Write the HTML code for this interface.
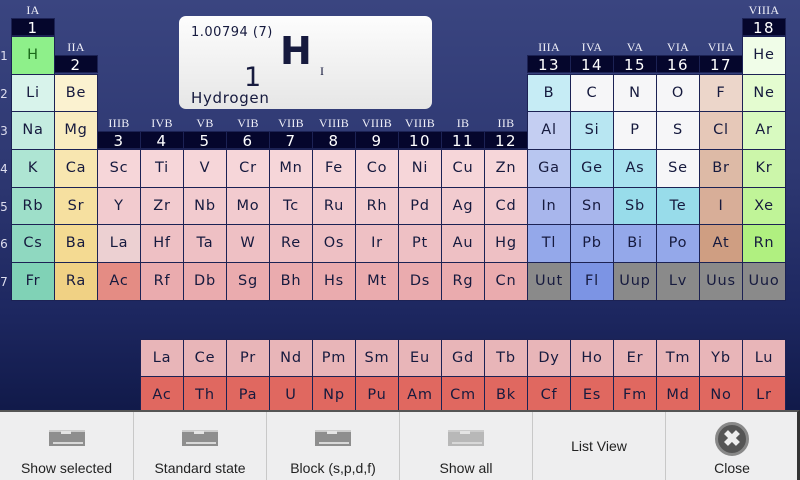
<!DOCTYPE html>
<html><head><meta charset="utf-8"><style>
*{margin:0;padding:0;box-sizing:border-box}
body{width:800px;height:480px;overflow:hidden;position:relative;background:linear-gradient(180deg,#3a4580 0%,#2e3872 35%,#1d2760 65%,#111a4a 85%);font-family:"DejaVu Sans","Liberation Sans",sans-serif}
.c{position:absolute;width:44px;height:39px;border:1px solid #1c2254;color:#161a3e;font-size:14.5px;letter-spacing:.8px;text-align:center;line-height:36px}
.h{position:absolute;width:44px;height:18px;background:#05062c;color:#fff;font-size:15px;letter-spacing:1.5px;text-align:center;line-height:18px;border:1px solid #1c2254}
.g{position:absolute;width:44px;color:#f0f0f8;font-family:"Liberation Serif",serif;font-size:12px;text-align:center;letter-spacing:.3px}
.p{position:absolute;left:0;color:#dde;font-size:12px;width:8px;text-align:center}
.x1{left:11px}.x2{left:54px}.x3{left:97px}.x4{left:140px}.x5{left:183px}.x6{left:226px}.x7{left:269px}.x8{left:312px}.x9{left:355px}.x10{left:398px}.x11{left:441px}.x12{left:484px}.x13{left:527px}.x14{left:570px}.x15{left:613px}.x16{left:656px}.x17{left:699px}.x18{left:742px}
.y1{top:36px}.y2{top:74px}.y3{top:111px}.y4{top:149px}.y5{top:187px}.y6{top:224px}.y7{top:262px}.l1{top:339px}.l2{top:376px}
.r4{background:#f6d6d9}.r5{background:#f2cbcf}.r6{background:#eec0c4}.r7{background:#eaabae}
.ln{background:#e8b5b8}.ac{background:#e06860}
.pm1{background:#c4cef2}.pm2{background:#b8c6f0}.pm3{background:#a8b6ec}.pm4{background:#94a8ea}
.mt1{background:#c6ecf5}.mt2{background:#b8e6f2}.mt3{background:#a8e2ef}.mt4{background:#98dcea}
.nm{background:#f6f6f8}.gr{background:#8a8a8a}
#info{position:absolute;left:179px;top:16px;width:253px;height:93px;border-radius:7px;background:linear-gradient(180deg,#fdfdfd,#e6e6e6);color:#161a3e}
#tb{position:absolute;left:0;top:410px;width:800px;height:70px;background:#eeeeef;border-top:2px solid #555;border-right:3px solid #333}
.b{position:absolute;top:0;height:68px;width:133px;border-left:1px solid #c8c8c8;text-align:center;font-family:"Liberation Sans",sans-serif;font-size:14px;color:#222}
.b span{position:absolute;left:0;right:0;top:48px}
.ic{position:absolute;left:50%;margin-left:-18px;top:18px;width:36px;height:16px;background:#8e8e8e;border-top:2px solid #ccc}
.ic:before{content:"";position:absolute;left:12px;top:-1px;width:10px;height:3px;background:#e4e4e4}
.ic:after{content:"";position:absolute;left:4px;right:2px;bottom:2px;height:2px;background:#d8d8d8}
</style></head><body>
<div class="g x1" style="top:3px">IA</div><div class="h x1" style="top:18px">1</div>
<div class="g x2" style="top:40px">IIA</div><div class="h x2" style="top:55px">2</div>
<div class="g x3" style="top:116px">IIIB</div><div class="h x3" style="top:131px">3</div>
<div class="g x4" style="top:116px">IVB</div><div class="h x4" style="top:131px">4</div>
<div class="g x5" style="top:116px">VB</div><div class="h x5" style="top:131px">5</div>
<div class="g x6" style="top:116px">VIB</div><div class="h x6" style="top:131px">6</div>
<div class="g x7" style="top:116px">VIIB</div><div class="h x7" style="top:131px">7</div>
<div class="g x8" style="top:116px">VIIIB</div><div class="h x8" style="top:131px">8</div>
<div class="g x9" style="top:116px">VIIIB</div><div class="h x9" style="top:131px">9</div>
<div class="g x10" style="top:116px">VIIIB</div><div class="h x10" style="top:131px">10</div>
<div class="g x11" style="top:116px">IB</div><div class="h x11" style="top:131px">11</div>
<div class="g x12" style="top:116px">IIB</div><div class="h x12" style="top:131px">12</div>
<div class="g x13" style="top:40px">IIIA</div><div class="h x13" style="top:55px">13</div>
<div class="g x14" style="top:40px">IVA</div><div class="h x14" style="top:55px">14</div>
<div class="g x15" style="top:40px">VA</div><div class="h x15" style="top:55px">15</div>
<div class="g x16" style="top:40px">VIA</div><div class="h x16" style="top:55px">16</div>
<div class="g x17" style="top:40px">VIIA</div><div class="h x17" style="top:55px">17</div>
<div class="g x18" style="top:3px">VIIIA</div><div class="h x18" style="top:18px">18</div>
<div class="p" style="top:49px">1</div><div class="p" style="top:87px">2</div><div class="p" style="top:124px">3</div><div class="p" style="top:162px">4</div><div class="p" style="top:200px">5</div><div class="p" style="top:237px">6</div><div class="p" style="top:275px">7</div>

<div class="c x1 y1" style="background:#8ef08a;color:#1a6a1a">H</div>
<div class="c x1 y2" style="background:#d8f3eb">Li</div>
<div class="c x1 y3" style="background:#c4ece0">Na</div>
<div class="c x1 y4" style="background:#aee5d3">K</div>
<div class="c x1 y5" style="background:#9edfc9">Rb</div>
<div class="c x1 y6" style="background:#8fd8c0">Cs</div>
<div class="c x1 y7" style="background:#80d2b6">Fr</div>
<div class="c x2 y2" style="background:#fbf2d0">Be</div>
<div class="c x2 y3" style="background:#f9ecc0">Mg</div>
<div class="c x2 y4" style="background:#f8e6b0">Ca</div>
<div class="c x2 y5" style="background:#f6e0a0">Sr</div>
<div class="c x2 y6" style="background:#f4da92">Ba</div>
<div class="c x2 y7" style="background:#f0d184">Ra</div>

<div class="c x3 y4 r4">Sc</div><div class="c x4 y4 r4">Ti</div><div class="c x5 y4 r4">V</div><div class="c x6 y4 r4">Cr</div><div class="c x7 y4 r4">Mn</div><div class="c x8 y4 r4">Fe</div><div class="c x9 y4 r4">Co</div><div class="c x10 y4 r4">Ni</div><div class="c x11 y4 r4">Cu</div><div class="c x12 y4 r4">Zn</div>
<div class="c x3 y5 r5">Y</div><div class="c x4 y5 r5">Zr</div><div class="c x5 y5 r5">Nb</div><div class="c x6 y5 r5">Mo</div><div class="c x7 y5 r5">Tc</div><div class="c x8 y5 r5">Ru</div><div class="c x9 y5 r5">Rh</div><div class="c x10 y5 r5">Pd</div><div class="c x11 y5 r5">Ag</div><div class="c x12 y5 r5">Cd</div>
<div class="c x3 y6" style="background:#ecd0d2">La</div><div class="c x4 y6 r6">Hf</div><div class="c x5 y6 r6">Ta</div><div class="c x6 y6 r6">W</div><div class="c x7 y6 r6">Re</div><div class="c x8 y6 r6">Os</div><div class="c x9 y6 r6">Ir</div><div class="c x10 y6 r6">Pt</div><div class="c x11 y6 r6">Au</div><div class="c x12 y6 r6">Hg</div>
<div class="c x3 y7" style="background:#e48c84">Ac</div><div class="c x4 y7 r7">Rf</div><div class="c x5 y7 r7">Db</div><div class="c x6 y7 r7">Sg</div><div class="c x7 y7 r7">Bh</div><div class="c x8 y7 r7">Hs</div><div class="c x9 y7 r7">Mt</div><div class="c x10 y7 r7">Ds</div><div class="c x11 y7 r7">Rg</div><div class="c x12 y7 r7">Cn</div>

<div class="c x13 y2 mt1">B</div><div class="c x14 y2 nm">C</div><div class="c x15 y2 nm">N</div><div class="c x16 y2 nm">O</div><div class="c x17 y2" style="background:#ecd6ca">F</div>
<div class="c x13 y3 pm1">Al</div><div class="c x14 y3 mt2">Si</div><div class="c x15 y3 nm">P</div><div class="c x16 y3 nm">S</div><div class="c x17 y3" style="background:#e6c8b8">Cl</div>
<div class="c x13 y4 pm2">Ga</div><div class="c x14 y4 mt3">Ge</div><div class="c x15 y4 mt3">As</div><div class="c x16 y4 nm">Se</div><div class="c x17 y4" style="background:#ddbaa6">Br</div>
<div class="c x13 y5 pm3">In</div><div class="c x14 y5 pm3">Sn</div><div class="c x15 y5 mt4">Sb</div><div class="c x16 y5 mt4">Te</div><div class="c x17 y5" style="background:#d8ae98">I</div>
<div class="c x13 y6 pm4">Tl</div><div class="c x14 y6 pm4">Pb</div><div class="c x15 y6 pm4">Bi</div><div class="c x16 y6 pm4">Po</div><div class="c x17 y6" style="background:#cf9e82">At</div>
<div class="c x13 y7 gr">Uut</div><div class="c x14 y7" style="background:#7c94e4">Fl</div><div class="c x15 y7 gr">Uup</div><div class="c x16 y7 gr">Lv</div><div class="c x17 y7 gr">Uus</div>
<div class="c x18 y1" style="background:#f0fde8">He</div><div class="c x18 y2" style="background:#e4fcd0">Ne</div><div class="c x18 y3" style="background:#d8fac0">Ar</div><div class="c x18 y4" style="background:#ccf6aa">Kr</div><div class="c x18 y5" style="background:#c0f498">Xe</div><div class="c x18 y6" style="background:#b0f080">Rn</div><div class="c x18 y7 gr">Uuo</div>

<div class="c x4 l1 ln">La</div><div class="c x5 l1 ln">Ce</div><div class="c x6 l1 ln">Pr</div><div class="c x7 l1 ln">Nd</div><div class="c x8 l1 ln">Pm</div><div class="c x9 l1 ln">Sm</div><div class="c x10 l1 ln">Eu</div><div class="c x11 l1 ln">Gd</div><div class="c x12 l1 ln">Tb</div><div class="c x13 l1 ln">Dy</div><div class="c x14 l1 ln">Ho</div><div class="c x15 l1 ln">Er</div><div class="c x16 l1 ln">Tm</div><div class="c x17 l1 ln">Yb</div><div class="c x18 l1 ln">Lu</div>
<div class="c x4 l2 ac">Ac</div><div class="c x5 l2 ac">Th</div><div class="c x6 l2 ac">Pa</div><div class="c x7 l2 ac">U</div><div class="c x8 l2 ac">Np</div><div class="c x9 l2 ac">Pu</div><div class="c x10 l2 ac">Am</div><div class="c x11 l2 ac">Cm</div><div class="c x12 l2 ac">Bk</div><div class="c x13 l2 ac">Cf</div><div class="c x14 l2 ac">Es</div><div class="c x15 l2 ac">Fm</div><div class="c x16 l2 ac">Md</div><div class="c x17 l2 ac">No</div><div class="c x18 l2 ac">Lr</div>

<div id="info">
<div style="position:absolute;left:12px;top:9px;font-size:13px;letter-spacing:.5px">1.00794 (7)</div>
<div style="position:absolute;left:101px;top:14px;font-size:38px;font-weight:bold;line-height:42px">H</div>
<div style="position:absolute;left:141px;top:48px;font-family:'Liberation Serif',serif;font-size:12px">I</div>
<div style="position:absolute;left:65px;top:46px;font-size:27px;line-height:32px">1</div>
<div style="position:absolute;left:12px;top:73px;font-size:15px;letter-spacing:.7px">Hydrogen</div>
</div>

<div id="tb">
<div class="b" style="left:0;border-left:none"><div class="ic"></div><span>Show selected</span></div>
<div class="b" style="left:133px"><div class="ic"></div><span>Standard state</span></div>
<div class="b" style="left:266px"><div class="ic"></div><span>Block (s,p,d,f)</span></div>
<div class="b" style="left:399px"><div class="ic" style="background:#b8b8b8"></div><span>Show all</span></div>
<div class="b" style="left:532px"><span style="top:26px">List View</span></div>
<div class="b" style="left:665px"><div style="position:absolute;left:50%;margin-left:-17px;top:10px;width:34px;height:34px;border-radius:50%;background:#555;border:3px solid #888;color:#eee;font-size:22px;line-height:27px;font-weight:bold">✖</div><span>Close</span></div>
</div>
</body></html>
